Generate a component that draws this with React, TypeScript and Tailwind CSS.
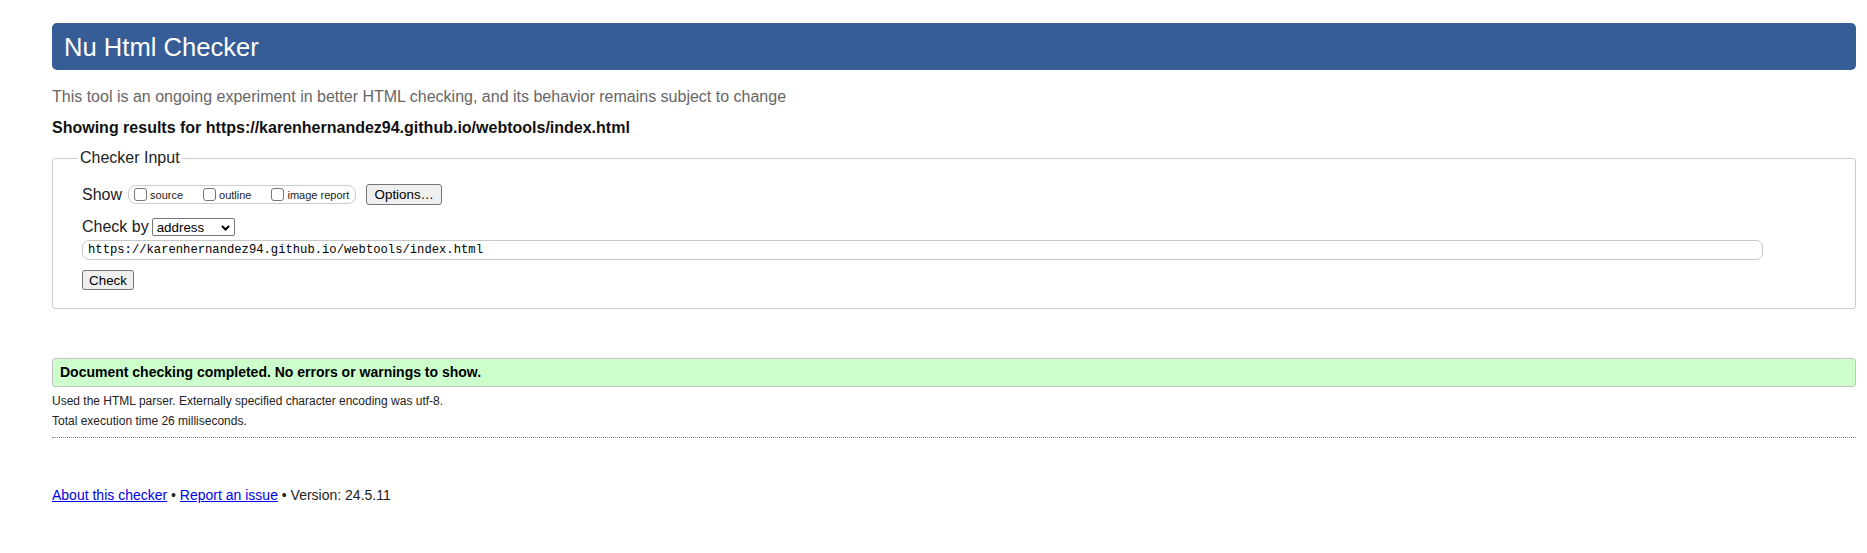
function Box({ label }: { label: string }) {
  return (
    <span className="flex items-center">
      <span className="w-[13px] h-[13px] border border-[#767676] rounded-[3px] bg-white" />
      <span className="ml-[3px] text-[11px] leading-[13px] pt-[2px]">{label}</span>
    </span>
  )
}

export default function App() {
  return (
    <div className="min-h-[553px] bg-white text-[#222] pl-[52px] pr-[11px] pt-[23px] [font-family:'Liberation_Sans',Arial,sans-serif]">
      <div className="h-[47px] bg-[#365d95] rounded-[5px] px-[12px] flex items-center">
        <h1 className="text-white text-[25.6px] leading-[30px]">Nu Html Checker</h1>
      </div>

      <p className="mt-[18px] text-[16px] leading-[18px] text-[#666]">
        This tool is an ongoing experiment in better HTML checking, and its behavior remains subject to change
      </p>
      <p className="mt-[13px] text-[16px] leading-[18px] font-bold text-[#111]">
        Showing results for https://karenhernandez94.github.io/webtools/index.html
      </p>

      <fieldset className="mt-[12px] border border-[#ccc] rounded-[3px] pl-[29px] pb-[16px]">
        <legend className="ml-[-4px] px-[2px] text-[16px] leading-[18px] text-[#222]">Checker Input</legend>

        <div className="mt-[17px] h-[21px] flex items-center">
          <span className="text-[16px] leading-[18px]">Show</span>
          <div className="ml-[6px] h-[19px] border border-[#ccc] rounded-[8px] pl-[5px] pr-[6px] flex items-center gap-[20px]">
            <Box label="source" />
            <Box label="outline" />
            <Box label="image report" />
          </div>
          <button className="ml-[10px] h-[21px] w-[76px] bg-[#efefef] border border-[#767676] rounded-[3px] text-[13.33px] leading-[15px] text-black">
            Options…
          </button>
        </div>

        <div className="mt-[13px] h-[18px] flex items-center">
          <span className="text-[16px] leading-[18px]">Check by</span>
          <div className="ml-[3px] h-[18px] w-[83px] border border-[#767676] rounded-[2px] bg-white flex items-center justify-between pl-[4px] pr-[4px]">
            <span className="text-[13.33px] leading-[15px] text-black">address</span>
            <svg width="9" height="6" viewBox="0 0 9 6" className="mt-[1px]">
              <path d="M1 1 L4.5 4.5 L8 1" fill="none" stroke="#000" strokeWidth="2" />
            </svg>
          </div>
        </div>

        <div className="mt-[4px] h-[20px] w-[1681px] border border-[#c8c8c8] rounded-[7px] bg-white flex items-center pl-[5px]">
          <span className="text-[12.2px] leading-[14px] text-black [font-family:'Liberation_Mono',monospace]">
            https://karenhernandez94.github.io/webtools/index.html
          </span>
        </div>

        <button className="mt-[10px] h-[20px] w-[52px] bg-[#efefef] border border-[#767676] rounded-[3px] text-[13.33px] leading-[15px] text-black">
          Check
        </button>
      </fieldset>

      <div className="mt-[49px] h-[29px] bg-[#ccffcc] border border-[#c4c4c4] rounded-[3px] flex items-center pl-[7px]">
        <span className="text-[14px] leading-[16px] font-bold text-black">
          Document checking completed. No errors or warnings to show.
        </span>
      </div>

      <div className="mt-[4px] text-[12px] leading-[20px] text-[#222]">
        <p>Used the HTML parser. Externally specified character encoding was utf-8.</p>
        <p>Total execution time 26 milliseconds.</p>
      </div>

      <div className="mt-[6px] border-b border-dotted border-[#888]" />

      <p className="mt-[49px] text-[14px] leading-[16px] text-[#222]">
        <a href="#" className="text-[#0000ee] underline">About this checker</a>
        {' • '}
        <a href="#" className="text-[#0000ee] underline">Report an issue</a>
        {' • Version: 24.5.11'}
      </p>
    </div>
  )
}
